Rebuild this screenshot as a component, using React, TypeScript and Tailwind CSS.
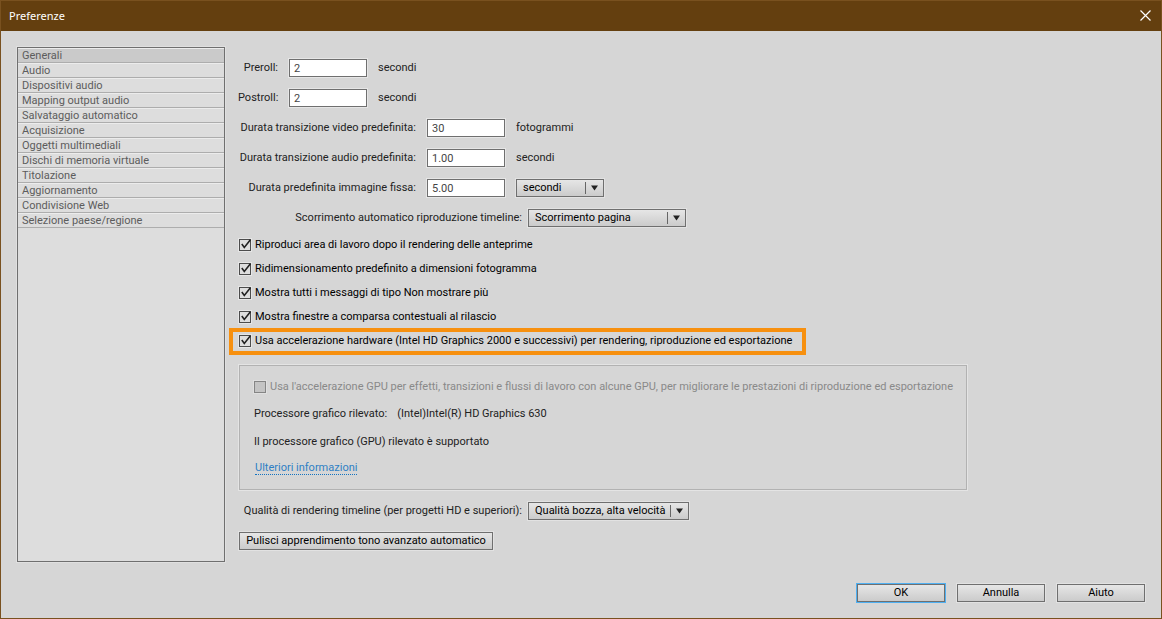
import { useState, type ReactNode } from "react";

const categories = [
  "Generali",
  "Audio",
  "Dispositivi audio",
  "Mapping output audio",
  "Salvataggio automatico",
  "Acquisizione",
  "Oggetti multimediali",
  "Dischi di memoria virtuale",
  "Titolazione",
  "Aggiornamento",
  "Condivisione Web",
  "Selezione paese/regione",
];

function NumberField({
  id,
  label,
  labelWidth,
  value,
  children,
}: {
  id: string;
  label: string;
  labelWidth: string;
  value: string;
  children: ReactNode;
}) {
  return (
    <div className="flex h-[18px] items-center gap-[11px]">
      <label htmlFor={id} className={`${labelWidth} shrink-0 text-right leading-4 whitespace-nowrap`}>
        {label}
      </label>
      <input
        id={id}
        type="text"
        defaultValue={value}
        className="h-[18px] w-[78px] border border-[#6f6f6f] bg-white px-1 text-[#444] shadow-[0_0_0_1px_#e6e6e6] outline-none"
      />
      {children}
    </div>
  );
}

function Dropdown({
  id,
  label,
  width,
  options,
}: {
  id: string;
  label?: string;
  width: string;
  options: string[];
}) {
  return (
    <div className={`${width} grid h-[18px] items-center`}>
      <select
        id={id}
        aria-label={label}
        className="col-start-1 row-start-1 h-[18px] w-full appearance-none border border-[#6f6f6f] bg-linear-to-b from-[#e6e6e6] to-[#cbcbcb] pb-0.5 pl-1.5 text-black shadow-[0_0_0_1px_#e2e2e2] outline-none"
      >
        {options.map((o) => (
          <option key={o}>{o}</option>
        ))}
      </select>
      <span className="pointer-events-none col-start-1 row-start-1 mr-[5px] flex items-center gap-1 justify-self-end">
        <span className="h-3 w-px bg-[#666]" />
        <svg width="9" height="6" viewBox="0 0 9 6" aria-hidden="true">
          <path d="M1 0.5h7L4.5 5.5z" fill="#222" />
        </svg>
      </span>
    </div>
  );
}

function Check({ label }: { label: string }) {
  const [on, setOn] = useState(true);
  return (
    <label className="flex h-4 w-fit items-center gap-1 whitespace-nowrap text-black">
      <span className="grid shrink-0">
        <input
          type="checkbox"
          checked={on}
          onChange={(e) => setOn(e.target.checked)}
          className="col-start-1 row-start-1 size-3 appearance-none border border-[#4c4c4c] bg-[#dedede] shadow-[0_0_0_1px_#e6e6e6]"
        />
        {on && (
          <svg
            width="12"
            height="12"
            viewBox="0 0 12 12"
            className="pointer-events-none col-start-1 row-start-1 overflow-visible"
            aria-hidden="true"
          >
            <path d="M2.8 5L5.3 8.4L11.4 0.8" fill="none" stroke="#222" strokeWidth="1.6" />
          </svg>
        )}
      </span>
      {label}
    </label>
  );
}

function PushButton({ children, primary, width }: { children: ReactNode; primary?: boolean; width: string }) {
  return (
    <button
      type="button"
      className={`${width} h-[18px] border border-[#6f6f6f] bg-linear-to-b from-[#e6e6e6] to-[#cbcbcb] pb-px leading-[15px] whitespace-nowrap text-black ${
        primary ? "shadow-[0_0_0_1px_#4fb0f2]" : "shadow-[0_0_0_1px_#e2e2e2]"
      }`}
    >
      {children}
    </button>
  );
}

export default function App() {
  const [active, setActive] = useState("Generali");
  return (
    <div className="flex min-h-screen flex-col border border-[#79511f] bg-[#d6d6d6] font-['Roboto','Noto_Sans',sans-serif] text-[11px] leading-4 text-[#222]">
      <header className="flex h-[30px] items-center justify-between bg-[#643f0f] pr-[10px] pl-2 text-white">
        <h1 className="font-['Noto_Sans',sans-serif] text-[11px]">Preferenze</h1>
        <button type="button" aria-label="Chiudi" className="pb-0.5">
          <svg width="11" height="11" viewBox="0 0 11 11" aria-hidden="true">
            <path d="M0.5 0.5l10 10M10.5 0.5l-10 10" stroke="#fff" strokeWidth="1.2" />
          </svg>
        </button>
      </header>

      <div className="flex flex-1 flex-col p-4">
        <div className="flex gap-[13px]">
          <nav aria-label="Categorie" className="w-[208px] shrink-0 border border-[#6f6f6f] bg-[#dddddd] shadow-[0_0_0_1px_#e0e0e0]">
            <ul>
              {categories.map((c) => (
                <li key={c}>
                  <button
                    type="button"
                    onClick={() => setActive(c)}
                    className={`block h-[15px] w-full border-t border-b border-t-[#ececec] border-b-[#adadad] pl-1 text-left leading-[13px] text-[#5c5c5c] ${
                      active === c ? "bg-[#cacaca]" : ""
                    }`}
                  >
                    {c}
                  </button>
                </li>
              ))}
            </ul>
          </nav>

          <main className="min-w-0 flex-1 pt-3 pb-3">
            <div className="flex flex-col gap-3">
              <NumberField id="preroll" label="Preroll:" labelWidth="w-10" value="2">
                <span>secondi</span>
              </NumberField>
              <NumberField id="postroll" label="Postroll:" labelWidth="w-10" value="2">
                <span>secondi</span>
              </NumberField>
              <NumberField id="video" label="Durata transizione video predefinita:" labelWidth="w-[178px]" value="30">
                <span>fotogrammi</span>
              </NumberField>
              <NumberField id="audio" label="Durata transizione audio predefinita:" labelWidth="w-[178px]" value="1.00">
                <span>secondi</span>
              </NumberField>
              <NumberField id="still" label="Durata predefinita immagine fissa:" labelWidth="w-[178px]" value="5.00">
                <Dropdown id="unit" label="Unità di durata" width="w-[88px]" options={["secondi", "fotogrammi"]} />
              </NumberField>
              <div className="flex h-[18px] items-center gap-1.5">
                <label htmlFor="scroll" className="w-[284px] shrink-0 text-right whitespace-nowrap">
                  Scorrimento automatico riproduzione timeline:
                </label>
                <Dropdown id="scroll" width="w-[158px]" options={["Scorrimento pagina", "Nessuno"]} />
              </div>
            </div>

            <div className="mt-2.5 ml-px flex flex-col gap-2">
              <Check label="Riproduci area di lavoro dopo il rendering delle anteprime" />
              <Check label="Ridimensionamento predefinito a dimensioni fotogramma" />
              <Check label="Mostra tutti i messaggi di tipo Non mostrare più" />
              <Check label="Mostra finestre a comparsa contestuali al rilascio" />
              <div className="-mt-[5px] -mb-1.5 -ml-[10px] w-fit border-4 border-[#f7900f] pt-px pr-[10px] pb-0.5 pl-1.5">
                <Check label="Usa accelerazione hardware (Intel HD Graphics 2000 e successivi) per rendering, riproduzione ed esportazione" />
              </div>
            </div>

            <section className="mt-4 ml-px w-[728px] max-w-full border border-[#b2b2b2] px-[14px] pt-[13px] pb-3.5 shadow-[0_0_0_1px_#e4e4e4]">
              <label className="flex h-4 items-center gap-1 whitespace-nowrap text-[#898989]">
                <input
                  type="checkbox"
                  disabled
                  className="size-3 shrink-0 appearance-none border border-[#858585] bg-[#c4c4c4] shadow-[0_0_0_1px_#e0e0e0]"
                />
                Usa l'accelerazione GPU per effetti, transizioni e flussi di lavoro con alcune GPU, per migliorare le prestazioni di
                riproduzione ed esportazione
              </label>
              <dl className="mt-[11px] flex gap-2.5">
                <dt>Processore grafico rilevato:</dt>
                <dd>(Intel)Intel(R) HD Graphics 630</dd>
              </dl>
              <p className="mt-3">Il processore grafico (GPU) rilevato è supportato</p>
              <a
                href="#info"
                className="mt-[11px] ml-px block w-fit border-b border-dotted border-[#1473c0] leading-[13px] text-[#2f7fc4]"
              >
                Ulteriori informazioni
              </a>
            </section>

            <div className="mt-3 flex h-[18px] items-center gap-1.5">
              <label htmlFor="quality" className="w-[284px] shrink-0 text-right whitespace-nowrap">
                Qualità di rendering timeline (per progetti HD e superiori):
              </label>
              <Dropdown id="quality" width="w-[161px]" options={["Qualità bozza, alta velocità", "Alta qualità"]} />
            </div>
            <div className="mt-3 ml-px flex">
              <PushButton width="w-[254px]">Pulisci apprendimento tono avanzato automatico</PushButton>
            </div>
          </main>
        </div>

        <footer className="mt-auto flex justify-end gap-3">
          <PushButton width="w-[88px]" primary>
            OK
          </PushButton>
          <PushButton width="w-[88px]">Annulla</PushButton>
          <PushButton width="w-[88px]">Aiuto</PushButton>
        </footer>
      </div>
    </div>
  );
}
